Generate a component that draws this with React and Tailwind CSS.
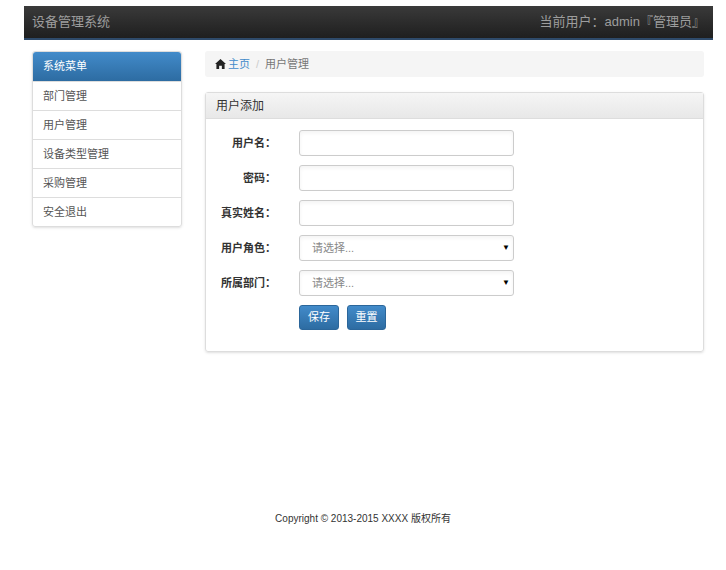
export default function App() {
  const menu = ["部门管理", "用户管理", "设备类型管理", "采购管理", "安全退出"];
  const rows = [
    { label: "用户名：", type: "input" },
    { label: "密码：", type: "input" },
    { label: "真实姓名：", type: "input" },
    { label: "用户角色：", type: "select" },
    { label: "所属部门：", type: "select" },
  ];
  return (
    <div className="h-[570px] w-[726px] bg-white text-[11px] text-[#333]" style={{ fontFamily: '"Liberation Sans", "Noto Sans CJK SC", sans-serif' }}>
      <div className="pt-[6px] pl-[24px] pr-[13px]">
        <div className="flex h-[34px] items-center justify-between border-b-2 border-[#2e4a6a] bg-gradient-to-b from-[#3a3a3a] to-[#1f1f1f] px-[8px]">
          <span className="text-[13px] text-[#9d9d9d]">设备管理系统</span>
          <span className="text-[13px] text-[#9d9d9d]">当前用户：admin『管理员』</span>
        </div>
      </div>
      <div className="flex gap-[23px] pl-[32px] pr-[22px] pt-[11px]">
        <div className="w-[150px] self-start rounded-[3px] border border-[#ddd] shadow-sm">
          <div className="flex h-[29px] items-center rounded-t-[3px] bg-gradient-to-b from-[#428bca] to-[#2d6ca2] px-[10px] text-white">系统菜单</div>
          {menu.map((m) => (
            <div key={m} className="flex h-[29px] items-center border-t border-[#ddd] px-[10px] text-[#555]">{m}</div>
          ))}
        </div>
        <div className="flex-1">
          <div className="flex h-[26px] items-center rounded-[3px] bg-[#f5f5f5] px-[10px]">
            <svg width="11" height="10" viewBox="0 0 12 11" className="mr-[2px]"><path d="M6 0 L12 5.5 H10.5 V11 H7.5 V7.5 H4.5 V11 H1.5 V5.5 H0 Z" fill="#222" /></svg>
            <span className="text-[#428bca]">主页</span>
            <span className="mx-[6px] text-[#ccc]">/</span>
            <span className="text-[#777]">用户管理</span>
          </div>
          <div className="mt-[15px] h-[260px] rounded-[3px] border border-[#ddd] shadow-sm">
            <div className="flex h-[26px] items-center border-b border-[#ddd] bg-gradient-to-b from-[#f5f5f5] to-[#e8e8e8] px-[10px] text-[12px] text-[#333]">用户添加</div>
            <div className="pt-[11px]">
              {rows.map((r) => (
                <div key={r.label} className="mb-[9px] flex items-center">
                  <div className="w-[70px] text-right font-bold">{r.label}</div>
                  <div className="ml-[23px] flex h-[26px] w-[215px] items-center justify-between rounded-[3px] border border-[#ccc] pl-[12px] pr-[3px] shadow-inner">
                    {r.type === "select" && (
                      <>
                        <span className="text-[#888]">请选择...</span>
                        <span className="text-[8px] text-black">▼</span>
                      </>
                    )}
                  </div>
                </div>
              ))}
              <div className="ml-[93px] flex gap-[8px]">
                <button className="h-[25px] w-[40px] rounded-[3px] border border-[#2b669a] bg-gradient-to-b from-[#428bca] to-[#2d6ca2] text-white">保存</button>
                <button className="h-[25px] w-[39px] rounded-[3px] border border-[#2b669a] bg-gradient-to-b from-[#428bca] to-[#2d6ca2] text-white">重置</button>
              </div>
            </div>
          </div>
        </div>
      </div>
      <div className="mt-[159px] text-center text-[10px] text-[#333]">Copyright © 2013-2015 XXXX 版权所有</div>
    </div>
  );
}
